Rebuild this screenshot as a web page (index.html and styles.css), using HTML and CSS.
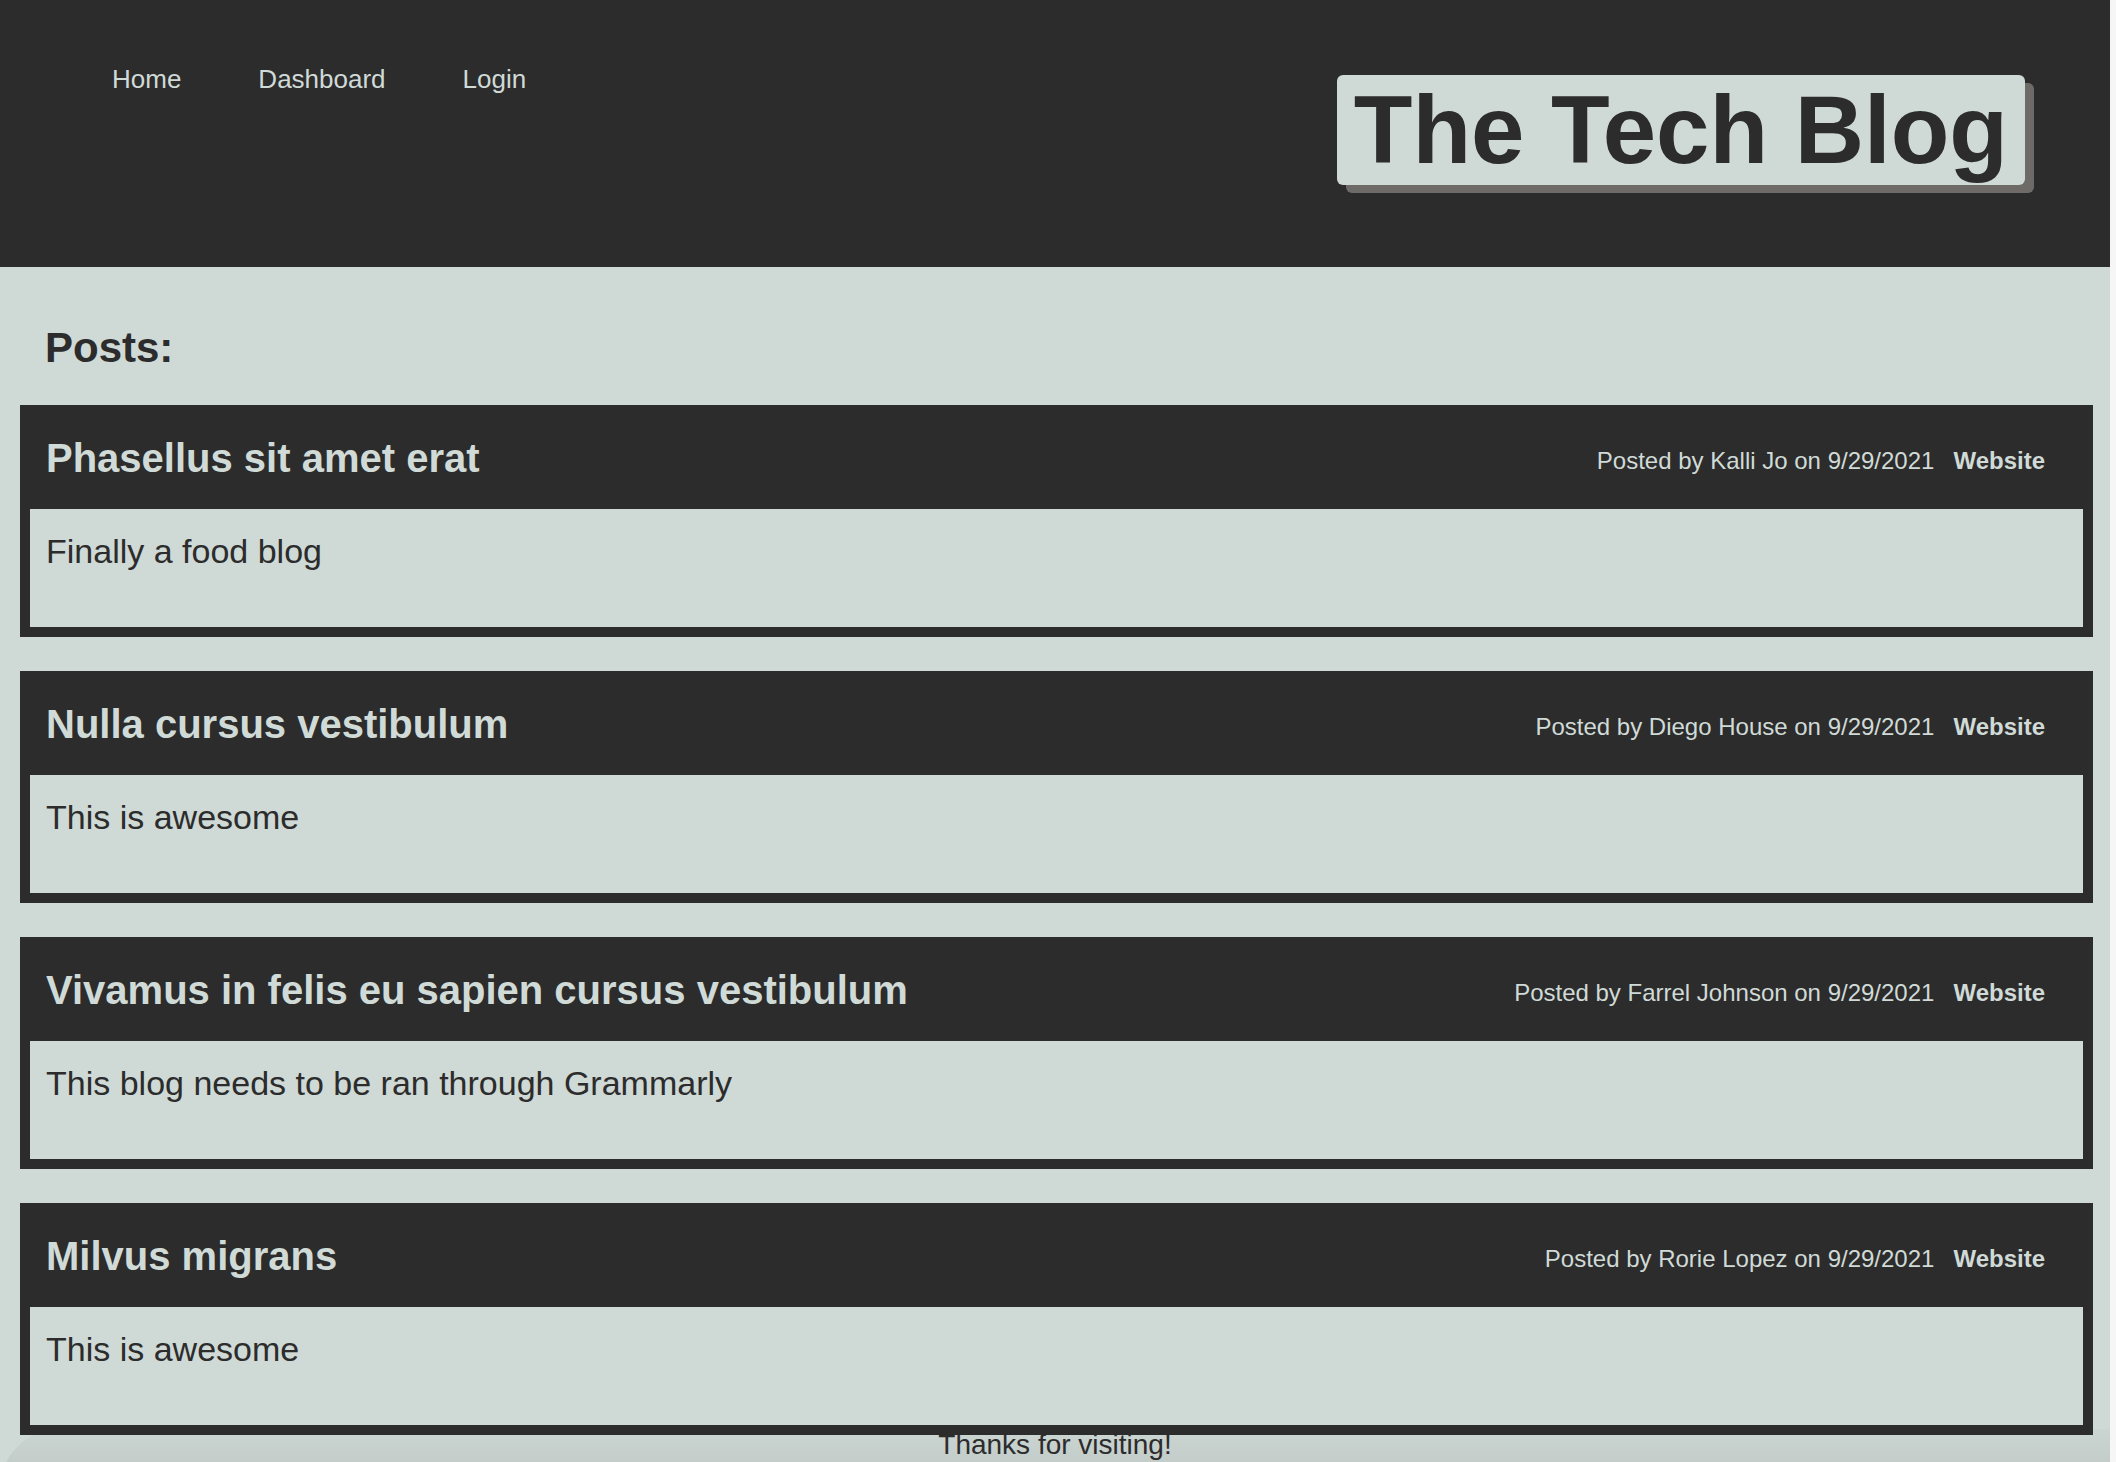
FILE: index.html
```html
<!DOCTYPE html>
<html lang="en">
<head>
<meta charset="utf-8">
<title>The Tech Blog</title>
<link rel="stylesheet" href="styles.css">
</head>
<body>
<header class="site-header">
  <nav class="nav">
    <a href="#" class="nav-link">Home</a>
    <a href="#" class="nav-link">Dashboard</a>
    <a href="#" class="nav-link">Login</a>
  </nav>
  <h1 class="brand">The Tech Blog</h1>
</header>
<main class="main">
  <h2 class="section-title">Posts:</h2>
  <div class="posts">
    <article class="post">
      <div class="post-head">
        <h3 class="post-title">Phasellus sit amet erat</h3>
        <div class="post-meta"><span>Posted by Kalli Jo on 9/29/2021</span><a href="#" class="post-link">Website</a></div>
      </div>
      <div class="post-body">Finally a food blog</div>
    </article>
    <article class="post">
      <div class="post-head">
        <h3 class="post-title">Nulla cursus vestibulum</h3>
        <div class="post-meta"><span>Posted by Diego House on 9/29/2021</span><a href="#" class="post-link">Website</a></div>
      </div>
      <div class="post-body">This is awesome</div>
    </article>
    <article class="post">
      <div class="post-head">
        <h3 class="post-title">Vivamus in felis eu sapien cursus vestibulum</h3>
        <div class="post-meta"><span>Posted by Farrel Johnson on 9/29/2021</span><a href="#" class="post-link">Website</a></div>
      </div>
      <div class="post-body">This blog needs to be ran through Grammarly</div>
    </article>
    <article class="post">
      <div class="post-head">
        <h3 class="post-title">Milvus migrans</h3>
        <div class="post-meta"><span>Posted by Rorie Lopez on 9/29/2021</span><a href="#" class="post-link">Website</a></div>
      </div>
      <div class="post-body">This is awesome</div>
    </article>
  </div>
</main>
<footer class="site-footer">Thanks for visiting!</footer>
</body>
</html>
```

FILE: styles.css
```css
html {
  background: #f6f6f6;
}
body {
  margin: 0 6px 0 0;
  background: #cfd9d6;
  color: #2c2c2c;
  font-family: "Liberation Sans", Arial, Helvetica, sans-serif;
  min-height: 1462px;
}
.site-header {
  height: 267px;
  background: #2c2c2c;
  display: flex;
  justify-content: space-between;
  align-items: flex-start;
  box-sizing: border-box;
  padding: 0 85px 0 112px;
}
.nav {
  display: flex;
  gap: 77px;
  padding-top: 64px;
}
.nav-link {
  color: #d0dad7;
  text-decoration: none;
  font-size: 26px;
  line-height: 30px;
}
.brand {
  margin: 75px 0 0 0;
  background: #cfd9d6;
  color: #2c2c2c;
  font-size: 96px;
  font-weight: bold;
  line-height: 110px;
  padding: 0 17px;
  border-radius: 6px;
  box-shadow: 9px 8px 0 #6e6a68;
}
.main {
  padding: 0 17px 0 20px;
}
.section-title {
  margin: 0;
  padding: 57px 0 33px 25px;
  font-size: 42px;
  line-height: 48px;
  font-weight: bold;
}
.posts {
  display: flex;
  flex-direction: column;
  gap: 34px;
}
.post {
  position: relative;
  border: 10px solid #2c2c2c;
  background: #2c2c2c;
}
.post-head {
  height: 94px;
  display: flex;
  align-items: center;
  justify-content: space-between;
  padding: 0 38px 0 16px;
  margin-top: -4px;
}
.post-title {
  margin: 0;
  color: #d0dad7;
  font-size: 40px;
  font-weight: bold;
}
.post-meta {
  color: #d0dad7;
  font-size: 24px;
  padding-top: 6px;
}
.post-link {
  color: #d0dad7;
  font-weight: bold;
  text-decoration: none;
  margin-left: 19px;
}
.post-body {
  margin-top: 4px;
  background: #cfd9d6;
  height: 118px;
  box-sizing: border-box;
  padding: 23px 16px 0 16px;
  font-size: 34px;
  line-height: 39px;
}
.site-footer {
  margin-top: -6px;
  text-align: center;
  font-size: 28px;
  line-height: 32px;
  padding-bottom: 30px;
  background: linear-gradient(to bottom, #cbd5d2 0%, #bcc5c2 100%);
  border-radius: 60px 0 0 0;
}
```
